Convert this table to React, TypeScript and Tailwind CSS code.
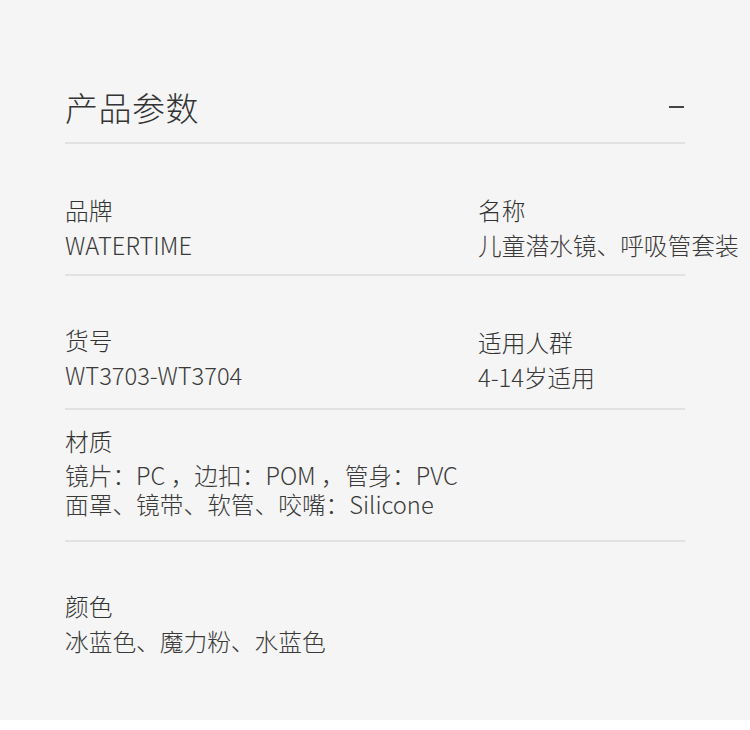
const font = { fontFamily: '"Noto Sans CJK SC", "Noto Sans", sans-serif' };

type Cell = { label: string; lines: string[] };

function Field({ cell, lift = "" }: { cell: Cell; lift?: string }) {
  return (
    <div className={lift}>
      <div className="text-[23.7px] leading-[35px] text-[#333] font-light">{cell.label}</div>
      {cell.lines.map((l) => (
        <div key={l} className="text-[23.7px] leading-[35px] text-[#3a3a3a] font-light whitespace-nowrap">
          {l}
        </div>
      ))}
    </div>
  );
}

export default function App() {
  return (
    <div style={font} className="w-[750px] h-[730px] bg-white">
      <div className="bg-[#f5f5f5] h-[720px] pl-[65px] pt-[82px]">
        <div className="w-[620px]">
          {/* header */}
          <div className="flex items-center justify-between pb-[10px] border-b-2 border-[#e2e2e2]">
            <h1 className="text-[33px] leading-[50px] text-[#333] font-light tracking-[0.5px]">产品参数</h1>
            <div className="w-[15px] h-[2px] bg-[#444] mr-px" />
          </div>

          {/* row 1 */}
          <div className="grid grid-cols-[413px_1fr] pt-[49px] pb-[11px] border-b-2 border-[#e2e2e2]">
            <Field cell={{ label: "品牌", lines: ["WATERTIME"] }} />
            <Field cell={{ label: "名称", lines: ["儿童潜水镜、呼吸管套装"] }} />
          </div>

          {/* row 2 */}
          <div className="grid grid-cols-[413px_1fr] pt-[47px] pb-[13px] border-b-2 border-[#e2e2e2]">
            <Field cell={{ label: "货号", lines: ["WT3703-WT3704"] }} />
            <Field cell={{ label: "适用人群", lines: ["4-14岁适用"] }} lift="pt-[2px]" />
          </div>

          {/* row 3 */}
          <div className="pt-[14px] pb-[21px] border-b-2 border-[#e2e2e2]">
            <div className="text-[23.7px] leading-[35px] text-[#333] font-light">材质</div>
            <div className="mt-[2px] text-[23.7px] leading-[29px] text-[#3a3a3a] font-light whitespace-nowrap">
              <div>镜片：PC ，边扣：POM ，管身：PVC</div>
              <div>面罩、镜带、软管、咬嘴：Silicone</div>
            </div>
          </div>

          {/* row 4 */}
          <div className="pt-[47px]">
            <Field cell={{ label: "颜色", lines: ["冰蓝色、魔力粉、水蓝色"] }} />
          </div>
        </div>
      </div>
    </div>
  );
}
